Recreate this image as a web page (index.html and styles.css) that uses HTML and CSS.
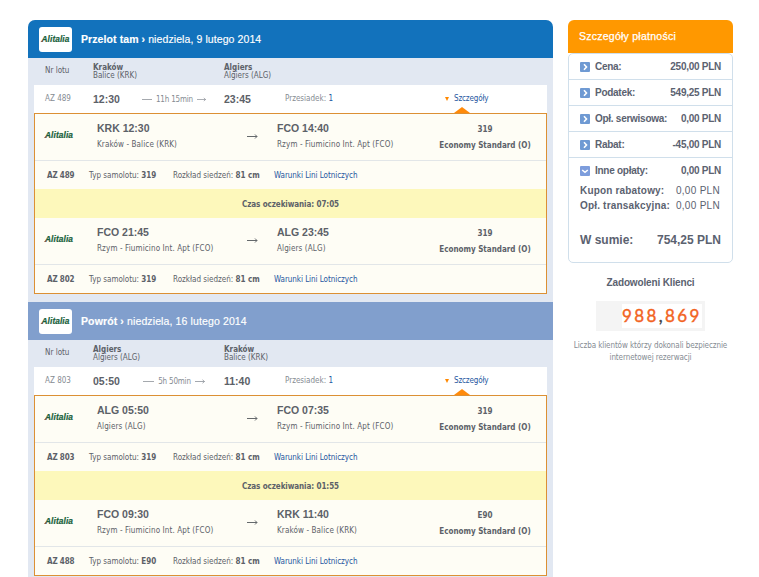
FILE: index.html
```html
<!DOCTYPE html>
<html lang="pl">
<head>
<meta charset="utf-8">
<title>Szczegóły lotu</title>
<link rel="stylesheet" href="styles.css">
</head>
<body>
<svg class="defs" width="0" height="0" aria-hidden="true">
  <symbol id="arrow" viewBox="0 0 11 7"><path d="M0 3.5H10M8 1.5L10 3.5L8 5.5" fill="none" stroke="#65696c" stroke-width="1"/></symbol>
  <symbol id="arrow-small" viewBox="0 0 10 5"><path d="M0 2.5H9.5M7.5 .8L9.5 2.5L7.5 4.2" fill="none" stroke="#8d9299" stroke-width=".8"/></symbol>
  <symbol id="box-right" viewBox="0 0 10 10"><rect width="10" height="10" rx="1" fill="#6f9ad3"/><path d="M4 2.3L6.5 5L4 7.7" fill="none" stroke="#fff" stroke-width="1.6"/></symbol>
  <symbol id="box-down" viewBox="0 0 10 10"><rect width="10" height="10" rx="1" fill="#7d9ddc"/><path d="M2.2 4L5 6.3L7.8 4" fill="none" stroke="#fff" stroke-width="1.6"/></symbol>
</svg>
<div class="page">
  <main class="flights">
    <section class="trip">
      <header class="trip-head"><div class="badge"><span class="logo">Alitalia</span></div><h2><b>Przelot tam ›</b> niedziela, 9 lutego 2014</h2></header>
      <div class="cols"><span class="nr">Nr lotu</span><div><b>Kraków</b><span>Balice (KRK)</span></div><div><b>Algiers</b><span>Algiers (ALG)</span></div></div>
      <div class="summary"><span class="nr">AZ 489</span><b class="time">12:30</b><span class="dur"><i></i><span>11h 15min</span><svg><use href="#arrow-small"/></svg></span><b class="time">23:45</b><span class="stops">Przesiadek: <a>1</a></span><a class="more"><i></i>Szczegóły</a></div>
      <div class="details">
        <div class="seg"><span class="logo">Alitalia</span><div><b class="code">KRK 12:30</b><span class="port">Kraków - Balice (KRK)</span></div><svg class="arrow"><use href="#arrow"/></svg><div><b class="code">FCO 14:40</b><span class="port">Rzym - Fiumicino Int. Apt (FCO)</span></div><div class="cabin"><b>319</b><b>Economy Standard (O)</b></div></div>
        <div class="info"><b>AZ 489</b><span>Typ samolotu: <b>319</b></span><span>Rozkład siedzeń: <b>81 cm</b></span><a>Warunki Lini Lotniczych</a></div>
        <div class="wait">Czas oczekiwania: 07:05</div>
        <div class="seg"><span class="logo">Alitalia</span><div><b class="code">FCO 21:45</b><span class="port">Rzym - Fiumicino Int. Apt (FCO)</span></div><svg class="arrow"><use href="#arrow"/></svg><div><b class="code">ALG 23:45</b><span class="port">Algiers (ALG)</span></div><div class="cabin"><b>319</b><b>Economy Standard (O)</b></div></div>
        <div class="info"><b>AZ 802</b><span>Typ samolotu: <b>319</b></span><span>Rozkład siedzeń: <b>81 cm</b></span><a>Warunki Lini Lotniczych</a></div>
      </div>
    </section>
    <section class="trip back">
      <header class="trip-head"><div class="badge"><span class="logo">Alitalia</span></div><h2><b>Powrót ›</b> niedziela, 16 lutego 2014</h2></header>
      <div class="cols"><span class="nr">Nr lotu</span><div><b>Algiers</b><span>Algiers (ALG)</span></div><div><b>Kraków</b><span>Balice (KRK)</span></div></div>
      <div class="summary"><span class="nr">AZ 803</span><b class="time">05:50</b><span class="dur"><i></i><span>5h 50min</span><svg><use href="#arrow-small"/></svg></span><b class="time">11:40</b><span class="stops">Przesiadek: <a>1</a></span><a class="more"><i></i>Szczegóły</a></div>
      <div class="details">
        <div class="seg"><span class="logo">Alitalia</span><div><b class="code">ALG 05:50</b><span class="port">Algiers (ALG)</span></div><svg class="arrow"><use href="#arrow"/></svg><div><b class="code">FCO 07:35</b><span class="port">Rzym - Fiumicino Int. Apt (FCO)</span></div><div class="cabin"><b>319</b><b>Economy Standard (O)</b></div></div>
        <div class="info"><b>AZ 803</b><span>Typ samolotu: <b>319</b></span><span>Rozkład siedzeń: <b>81 cm</b></span><a>Warunki Lini Lotniczych</a></div>
        <div class="wait">Czas oczekiwania: 01:55</div>
        <div class="seg"><span class="logo">Alitalia</span><div><b class="code">FCO 09:30</b><span class="port">Rzym - Fiumicino Int. Apt (FCO)</span></div><svg class="arrow"><use href="#arrow"/></svg><div><b class="code">KRK 11:40</b><span class="port">Kraków - Balice (KRK)</span></div><div class="cabin"><b>E90</b><b>Economy Standard (O)</b></div></div>
        <div class="info"><b>AZ 488</b><span>Typ samolotu: <b>E90</b></span><span>Rozkład siedzeń: <b>81 cm</b></span><a>Warunki Lini Lotniczych</a></div>
      </div>
    </section>
  </main>
  <aside class="side">
    <h3>Szczegóły płatności</h3>
    <div class="pay">
      <div class="line"><svg><use href="#box-right"/></svg><span>Cena:</span><b>250,00 PLN</b></div>
      <div class="line"><svg><use href="#box-right"/></svg><span>Podatek:</span><b>549,25 PLN</b></div>
      <div class="line"><svg><use href="#box-right"/></svg><span>Opł. serwisowa:</span><b>0,00 PLN</b></div>
      <div class="line"><svg><use href="#box-right"/></svg><span>Rabat:</span><b>-45,00 PLN</b></div>
      <div class="line open"><svg><use href="#box-down"/></svg><span>Inne opłaty:</span><b>0,00 PLN</b></div>
      <div class="sub"><b>Kupon rabatowy:</b><span>0,00 PLN</span></div>
      <div class="sub"><b>Opł. transakcyjna:</b><span>0,00 PLN</span></div>
      <div class="total"><span>W sumie:</span><span>754,25 PLN</span></div>
    </div>
    <div class="clients">
      <h4>Zadowoleni Klienci</h4>
      <div class="counter"><span>988<em>,</em>869</span></div>
      <p>Liczba klientów którzy dokonali bezpiecznie<br>internetowej rezerwacji</p>
    </div>
  </aside>
</div>
</body>
</html>
```
FILE: styles.css
```css
* { box-sizing: border-box; }
body { margin: 0; height: 577px; overflow: hidden; background: #fff; color: #5c6168; font: 8px/10px "DejaVu Sans Condensed", "DejaVu Sans", sans-serif; white-space: nowrap; }
.defs { position: absolute; }
h2, h3, h4, p { margin: 0; }
a { color: #1f57a0; }
.page { display: flex; align-items: flex-start; gap: 15px; padding: 20px 0 0 28px; }
.flights { width: 525px; background: #e2e8f2; border-radius: 7px 7px 0 0; overflow: hidden; }
.trip { padding-bottom: 8px; }
.trip-head { display: flex; align-items: center; gap: 9px; height: 38px; padding-left: 11px; background: #1272bc; color: #fff; }
.back .trip-head { background: #819fcd; }
.trip-head h2 { font: 10.5px/14px "Liberation Sans", sans-serif; letter-spacing: .09px; -webkit-text-stroke: .15px #fff; }
.back h2 { letter-spacing: .12px; }
.badge { display: flex; align-items: center; justify-content: center; width: 33px; height: 25px; border-radius: 3px; background: #fff; }
.logo { position: relative; color: #17603a; font: italic bold 8.3px/10px "Liberation Sans", sans-serif; letter-spacing: .1px; -webkit-text-stroke: .2px #17603a; }
.logo::before { content: ""; position: absolute; left: -1px; top: 5px; width: 3px; height: 3px; background: #8d5548; clip-path: polygon(0 100%, 100% 0, 70% 100%); }
.cols { display: grid; grid-template-columns: 48px 131px 1fr; align-items: center; height: 27px; padding-left: 17px; line-height: 8px; }
.cols .nr { padding-bottom: 2px; }
.cols div { display: flex; flex-direction: column; }
.summary { display: grid; grid-template-columns: 48px 49px 82px 61px 160px 1fr; align-items: center; height: 28px; margin: 0 6px; padding-left: 11px; background: #fff; }
.summary .nr, .stops, .dur { color: #858b92; }
.dur > span { padding-top: 2px; letter-spacing: -.2px; }
.time, .code { font: bold 10.5px/14px "Liberation Sans", sans-serif; }
.dur { display: flex; align-items: center; gap: 4px; justify-content: center; width: 64px; }
.dur i { width: 11px; height: 1px; background: #a5a9ae; }
.dur svg { width: 10px; height: 5px; }
.more { display: flex; align-items: center; gap: 5px; letter-spacing: -.15px; }
.more i { border: 2px solid transparent; border-top: 4px solid #ff8800; border-bottom: 0; }
.details { position: relative; margin: 0 6px; border: 1px solid #dc9034; background: #fefdf5; }
.details::before { content: ""; position: absolute; left: 419px; top: -7px; border: 8px solid transparent; border-top: 0; border-bottom: 6px solid #ff8a0a; }
.seg { display: grid; grid-template-columns: 52px 150px 30px 147px 1fr; height: 46px; padding-left: 10px; align-items: start; }
.seg div { display: flex; flex-direction: column; padding-top: 7px; }
.seg .logo { margin-top: 16px; }
.port { margin-top: 5px; letter-spacing: .12px; }
.arrow { width: 11px; height: 7px; margin-top: 19px; }
.seg .cabin { align-items: center; gap: 6px; padding-top: 11px; }
.info { display: grid; grid-template-columns: 42px 84px 101px 1fr; align-items: center; height: 29px; padding: 1px 0 0 12px; border-top: 1px solid #e2e6e8; }
.info > b { letter-spacing: -.15px; }
.info a { letter-spacing: -.05px; }
.wait { height: 29px; background: #fdf8bb; font-weight: bold; line-height: 31px; letter-spacing: -.08px; text-align: center; }
.side { width: 165px; color: #5b6270; }
.side h3 { height: 33px; padding-left: 11px; border-radius: 6px 6px 0 0; background: #ff9800; color: #fff; font: 10.5px/33px "Liberation Sans", sans-serif; letter-spacing: .25px; -webkit-text-stroke: .25px #fff; }
.pay { height: 210px; border: 1px solid #d0dfeb; border-radius: 5px; font: 10px/14px "Liberation Sans", sans-serif; }
.line { display: flex; align-items: center; height: 26px; padding: 0 11px; border-bottom: 1px solid #d0dfeb; font-weight: bold; letter-spacing: -.27px; }
.line svg { width: 10px; height: 10px; margin-right: 5px; }
.line b, .sub span, .total span + span { margin-left: auto; }
.open { border: 0; }
.sub { display: flex; height: 15px; padding: 0 12px 0 11px; letter-spacing: .18px; }
.sub span { letter-spacing: .3px; }
.total { display: flex; margin-top: 19px; padding: 0 11px; font-size: 12px; font-weight: bold; }
.clients { display: flex; flex-direction: column; align-items: center; padding-top: 13px; }
.clients h4 { font: bold 10px/14px "Liberation Sans", sans-serif; letter-spacing: -.15px; }
.counter { width: 109px; height: 30px; margin-top: 11px; padding-left: 26px; background: #f4f4f4; color: #f2641f; font: 17px/30px Lato, sans-serif; letter-spacing: 2.4px; -webkit-text-stroke: .4px; }
.counter em { color: #444; font-style: normal; }
.counter span { display: inline-block; line-height: 24px; background: #fff; }
.clients p { margin-top: 9px; color: #858b92; line-height: 12px; letter-spacing: -.09px; text-align: center; }
```
